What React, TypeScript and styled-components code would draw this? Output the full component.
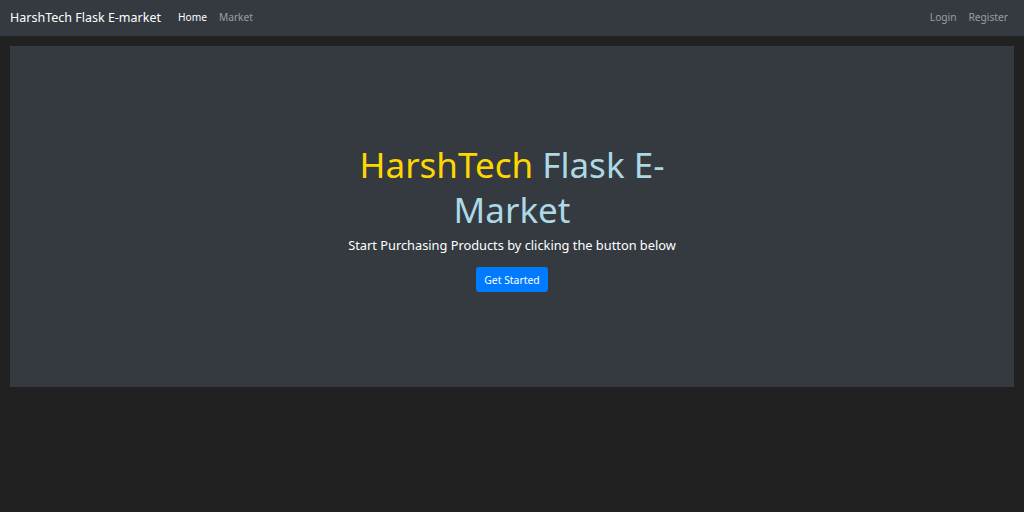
import React from "react";
import styled, { createGlobalStyle } from "styled-components";

const Global = createGlobalStyle`
  html, body { margin: 0; padding: 0; }
  body {
    background: #212121;
    font-family: "Noto Sans", "Open Sans", sans-serif;
    color: #fff;
  }
`;

const Page = styled.div`
  min-height: 512px;
  display: flex;
  flex-direction: column;
`;

const Navbar = styled.nav`
  height: 36px;
  background: #343a40;
  display: flex;
  align-items: center;
  padding: 0 10px 2px;
  box-sizing: border-box;
`;

const Brand = styled.a`
  font-size: 12.5px;
  color: #fff;
  margin-right: 17px;
  white-space: nowrap;
`;

const NavGroup = styled.div<{ $right?: boolean }>`
  display: flex;
  align-items: center;
  gap: 12px;
  margin-left: ${(p) => (p.$right ? "auto" : "0")};
  margin-right: ${(p) => (p.$right ? "6px" : "0")};
`;

const NavLink = styled.a<{ $active?: boolean }>`
  font-size: 10.2px;
  color: ${(p) => (p.$active ? "#ffffff" : "rgba(255,255,255,0.5)")};
  white-space: nowrap;
`;

const Hero = styled.section`
  margin: 10px 10px 0 10px;
  height: 341px;
  background: #343a40;
  display: flex;
  flex-direction: column;
  align-items: center;
  justify-content: flex-start;
  text-align: center;
  padding-top: 96px;
  box-sizing: border-box;
`;

const Title = styled.h1`
  margin: 0;
  width: 340px;
  font-size: 35px;
  font-weight: 400;
  line-height: 45px;
  color: #add8e6;
`;

const Gold = styled.span`
  color: #ffd700;
`;

const Lead = styled.p`
  margin: 3px 0 12px;
  font-size: 12.8px;
  line-height: 20px;
  color: #fff;
`;

const Button = styled.button`
  width: 72px;
  height: 25px;
  border: none;
  border-radius: 3px;
  background: #007bff;
  color: #fff;
  font-family: inherit;
  font-size: 10.4px;
  padding: 0;
`;

export default function App() {
  return (
    <Page>
      <Global />
      <Navbar>
        <Brand>HarshTech Flask E-market</Brand>
        <NavGroup>
          <NavLink $active>Home</NavLink>
          <NavLink>Market</NavLink>
        </NavGroup>
        <NavGroup $right>
          <NavLink>Login</NavLink>
          <NavLink>Register</NavLink>
        </NavGroup>
      </Navbar>
      <Hero>
        <Title>
          <Gold>HarshTech</Gold> Flask E-Market
        </Title>
        <Lead>Start Purchasing Products by clicking the button below</Lead>
        <Button>Get Started</Button>
      </Hero>
    </Page>
  );
}
